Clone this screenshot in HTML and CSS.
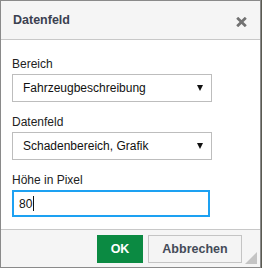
FILE: index.html
```html
<!DOCTYPE html>
<html lang="de">
<head>
<meta charset="utf-8">
<title>Datenfeld</title>
<link rel="stylesheet" href="styles.css">
</head>
<body>
<div class="dialog">
  <div class="header">
    <span class="title">Datenfeld</span>
    <svg class="close" width="11" height="10" viewBox="0 0 11 10"><path d="M1.2 0.8 L9.8 9.2 M9.8 0.8 L1.2 9.2" stroke="#727272" stroke-width="2.8" fill="none"/></svg>
  </div>
  <div class="body">
    <label class="label">Bereich</label>
    <div class="select"><span>Fahrzeugbeschreibung</span><span class="arrow"></span></div>
    <label class="label">Datenfeld</label>
    <div class="select"><span>Schadenbereich, Grafik</span><span class="arrow"></span></div>
    <label class="label">Höhe in Pixel</label>
    <div class="input"><span>80</span><span class="caret"></span></div>
  </div>
  <div class="footer">
    <button class="btn ok">OK</button>
    <button class="btn cancel">Abbrechen</button>
    <span class="grip"></span>
  </div>
</div>
</body>
</html>
```

FILE: styles.css
```css
html, body {
  margin: 0;
  padding: 0;
  background: #5a5a52;
}
body {
  font-family: "Liberation Sans", Arial, sans-serif;
  font-size: 12px;
  color: #222;
}
.dialog {
  width: 259px;
  height: 266px;
  border: 1px solid #8a8a8a;
  background: #fff;
  display: flex;
  flex-direction: column;
}
.header {
  height: 38px;
  background: #f5f5f5;
  border-bottom: 1px solid #c8c8c8;
  display: flex;
  align-items: center;
  justify-content: space-between;
  padding: 0 13px 0 12px;
}
.title {
  font-weight: bold;
  font-size: 12.5px;
  color: #3b4150;
}
.close {
  display: block;
  margin-top: 4px;
}
.body {
  flex: 1;
  padding: 17px 11px 0 11px;
}
.label {
  display: block;
  line-height: 14px;
  margin-bottom: 3px;
  color: #222;
}
.select {
  height: 26px;
  border: 1px solid #bdbdbd;
  display: flex;
  align-items: center;
  justify-content: space-between;
  padding: 0 8px 0 10px;
  box-sizing: content-box;
  width: 180px;
  margin-bottom: 13px;
  color: #111;
}
.arrow {
  width: 0;
  height: 0;
  border-left: 3px solid transparent;
  border-right: 3px solid transparent;
  border-top: 6px solid #111;
}
.input {
  width: 189px;
  height: 23px;
  border: 2px solid #1da1f2;
  display: flex;
  align-items: center;
  padding-left: 5px;
  color: #111;
}
.caret {
  display: inline-block;
  width: 1px;
  height: 15px;
  background: #111;
  margin-left: 1px;
}
.footer {
  height: 38px;
  background: #f5f5f5;
  border-top: 1px solid #c8c8c8;
  display: flex;
  justify-content: flex-end;
  align-items: flex-start;
  padding: 5px 18px 0 0;
  box-sizing: border-box;
  position: relative;
  gap: 5px;
}
.btn {
  height: 28px;
  font-family: "Liberation Sans", Arial, sans-serif;
  font-size: 12.5px;
  font-weight: bold;
  padding: 0;
  cursor: pointer;
}
.ok {
  width: 46px;
  background: #0b8a42;
  color: #fff;
  border: none;
}
.cancel {
  width: 94px;
  background: #f4f4f4;
  color: #444b58;
  border: 1px solid #c4c4c4;
}
.grip {
  position: absolute;
  right: 3px;
  bottom: 3px;
  width: 0;
  height: 0;
  border-left: 12px solid transparent;
  border-bottom: 12px solid #c4c4c4;
}
```
